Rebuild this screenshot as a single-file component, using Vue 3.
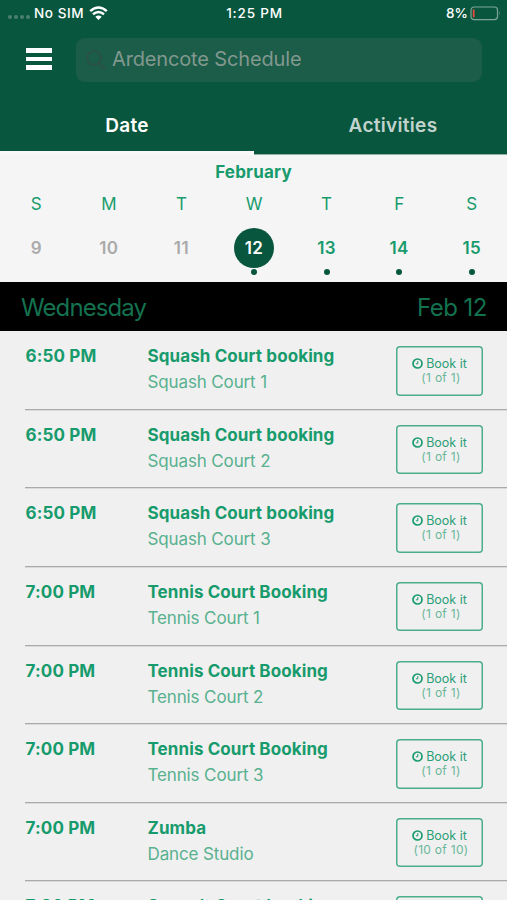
<template>
  <div class="app">
    <header class="header">
      <div class="status">
        <div class="status-left">
          <div class="signal"><i v-for="n in 4" :key="n"></i></div>
          <span class="carrier">No SIM</span>
          <svg class="wifi" width="19" height="15" viewBox="0 0 19 15">
            <path d="M1.2 5.1Q9.5-2 17.8 5.1" fill="none" stroke="#fff" stroke-width="2.5" />
            <path d="M4 8.3Q9.5 3.6 15 8.3" fill="none" stroke="#fff" stroke-width="2.5" />
            <path d="M6.3 10.8Q9.5 8.2 12.7 10.8L9.5 14Z" fill="#fff" />
          </svg>
        </div>
        <div class="clock">1:25 PM</div>
        <div class="status-right">
          <span class="percent">8%</span>
          <svg width="31" height="15" viewBox="0 0 31 15">
            <rect x="1" y="1" width="26.5" height="12.6" rx="3" fill="none" stroke="#7fa597" stroke-width="1.2" />
            <path d="M29 5.2q1.6 2.1 0 4.2z" fill="#7fa597" />
            <rect x="2.8" y="3.2" width="1.8" height="8.2" rx=".8" fill="#ea4b3c" />
          </svg>
        </div>
      </div>
      <div class="topbar">
        <button class="menu"><i></i><i></i><i></i></button>
        <div class="search">
          <svg width="22" height="22" viewBox="0 0 22 22" fill="none" stroke="#2b5145" stroke-width="1.8">
            <circle cx="9" cy="9" r="6.8" />
            <path d="M14 14l6 6" />
          </svg>
          <span>Ardencote Schedule</span>
        </div>
      </div>
      <nav class="tabs">
        <div class="tab active"><span>Date</span></div>
        <div class="tab"><span>Activities</span></div>
      </nav>
    </header>

    <section class="calendar">
      <div class="month"><span>February</span></div>
      <div class="week">
        <div v-for="day in days" :key="day.date" class="day" :class="{ past: day.date < today, selected: day.date === today }">
          <div class="letter">{{ day.letter }}</div>
          <div class="number">{{ day.date }}</div>
          <div v-if="day.date >= today" class="dot"></div>
        </div>
      </div>
    </section>

    <div class="day-title">
      <span class="weekday">Wednesday</span>
      <span class="date">Feb 12</span>
    </div>

    <div class="list">
      <div v-for="(item, index) in items" :key="index" class="item">
        <div class="time">{{ item.time }}</div>
        <div class="info">
          <div class="name">{{ item.name }}</div>
          <div class="place">{{ item.place }}</div>
        </div>
        <button class="book">
          <span class="book-label">
            <svg width="11" height="11" viewBox="0 0 11 11" fill="none" stroke="#179b6c">
              <circle cx="5.5" cy="5.5" r="4.5" stroke-width="1.7" />
              <path d="M5.8 3v2.8H3.9" stroke-width="1" />
            </svg>
            Book it
          </span>
          <span class="spots">({{ item.spots }})</span>
        </button>
      </div>
    </div>
  </div>
</template>

<script setup>
import { ref } from "vue";

const today = 12;

const days = [
  { letter: "S", date: 9 },
  { letter: "M", date: 10 },
  { letter: "T", date: 11 },
  { letter: "W", date: 12 },
  { letter: "T", date: 13 },
  { letter: "F", date: 14 },
  { letter: "S", date: 15 },
];

const items = ref([
  { time: "6:50 PM", name: "Squash Court booking", place: "Squash Court 1", spots: "1 of 1" },
  { time: "6:50 PM", name: "Squash Court booking", place: "Squash Court 2", spots: "1 of 1" },
  { time: "6:50 PM", name: "Squash Court booking", place: "Squash Court 3", spots: "1 of 1" },
  { time: "7:00 PM", name: "Tennis Court Booking", place: "Tennis Court 1", spots: "1 of 1" },
  { time: "7:00 PM", name: "Tennis Court Booking", place: "Tennis Court 2", spots: "1 of 1" },
  { time: "7:00 PM", name: "Tennis Court Booking", place: "Tennis Court 3", spots: "1 of 1" },
  { time: "7:00 PM", name: "Zumba", place: "Dance Studio", spots: "10 of 10" },
  { time: "7:30 PM", name: "Squash Court booking", place: "Squash Court 1", spots: "1 of 1" },
]);
</script>

<style>
body {
  background: #f0f0f0;
  overflow: hidden;
}
</style>

<style scoped>
* {
  box-sizing: border-box;
}
.app {
  height: 900px;
  overflow: hidden;
  font-family: "Inter", sans-serif;
  color: #179b6c;
  background: #f0f0f0;
}
button {
  font-family: inherit;
  background: none;
  border: 0;
  padding: 0;
}
.header {
  height: 155px;
  background: #09563e;
  color: #fff;
}
.status {
  display: grid;
  grid-template-columns: 1fr auto 1fr;
  align-items: center;
  height: 26px;
  padding: 0 6px 0 8px;
  font-size: 13.5px;
  font-weight: 500;
}
.status-left,
.status-right {
  display: flex;
  align-items: center;
}
.status-right {
  justify-content: flex-end;
  gap: 2px;
}
.signal {
  display: flex;
  gap: 2px;
  width: 26px;
  padding-top: 8px;
}
.signal i {
  width: 4px;
  height: 4px;
  border-radius: 50%;
  background: #4b806e;
}
.carrier {
  letter-spacing: .6px;
}
.wifi {
  margin-left: 5px;
}
.clock {
  letter-spacing: .8px;
}
.topbar {
  display: flex;
  align-items: center;
  height: 68px;
  padding: 0 25px 0 26px;
}
.menu {
  display: flex;
  flex-direction: column;
  gap: 4px;
  width: 26px;
  margin: -2px 24px 0 0;
}
.menu i {
  height: 4.7px;
  background: #fff;
}
.search {
  display: flex;
  flex: 1;
  align-items: center;
  height: 44px;
  padding-left: 9px;
  border-radius: 9px;
  background: #1b5d48;
  color: #82988f;
  font-size: 20px;
  letter-spacing: -.15px;
}
.search span {
  margin: -2px 0 0 5px;
}
.tabs {
  display: flex;
  height: 61px;
}
.tab {
  width: 253px;
  padding: 19px 0 0 25px;
  text-align: center;
  font-size: 19px;
  line-height: 26px;
  font-weight: 600;
  letter-spacing: .3px;
  color: #c2d3cd;
  border-bottom: 1px solid #8fb0a5;
}
.tab.active {
  width: 254px;
  padding-left: 0;
  color: #fff;
  border-bottom: 4px solid #f8f8f8;
}
.calendar {
  height: 127px;
  padding-top: 6px;
  background: #f5f5f5;
}
.month {
  text-align: center;
  font-size: 17px;
  line-height: 22px;
  font-weight: 700;
  letter-spacing: .2px;
}
.week {
  display: flex;
  width: 508px;
}
.day {
  display: flex;
  flex: 1;
  flex-direction: column;
  align-items: center;
  padding-top: 10px;
}
.letter {
  font-size: 17px;
  line-height: 22px;
}
.number {
  width: 40px;
  height: 40px;
  margin-top: 13px;
  border-radius: 50%;
  text-align: center;
  font-size: 17px;
  line-height: 40px;
  font-weight: 600;
  letter-spacing: .4px;
}
.past .number {
  color: #aaa;
}
.selected .number {
  color: #fff;
  background: #09563e;
}
.dot {
  width: 6px;
  height: 6px;
  margin-top: 1px;
  border-radius: 50%;
  background: #09563e;
}
.day-title {
  display: flex;
  justify-content: space-between;
  height: 49px;
  padding: 0 20px 0 21px;
  background: #000;
  color: #14724f;
  font-size: 24px;
  line-height: 51px;
}
.weekday {
  letter-spacing: -.9px;
}
.date {
  letter-spacing: -.5px;
}
.item {
  display: flex;
  height: 78.65px;
  margin-left: 25px;
  padding: 13px 24px 0 .5px;
  border-bottom: 1px solid #aaa;
  box-shadow: 0 1px #dadada;
}
.time {
  width: 122px;
  font-size: 17px;
  line-height: 24px;
  font-weight: 700;
  letter-spacing: .15px;
}
.info {
  flex: 1;
}
.name {
  font-size: 17px;
  line-height: 24px;
  font-weight: 700;
  letter-spacing: .1px;
}
.place {
  margin-top: 2px;
  font-size: 17px;
  line-height: 24px;
  letter-spacing: -.13px;
  color: #58b18f;
}
.book {
  display: flex;
  flex-direction: column;
  align-items: center;
  width: 87px;
  height: 49.5px;
  margin-top: 2px;
  padding-top: 10px;
  border-radius: 4px;
  box-shadow: inset 0 0 0 1.5px #4cae89;
  color: #2b9f77;
  font-size: 12.5px;
  line-height: 15px;
}
.book-label {
  display: flex;
  align-items: center;
  gap: 3px;
}
.spots {
  padding-left: 3px;
  font-size: 12px;
  line-height: 14px;
  letter-spacing: .3px;
  color: #69b799;
}
</style>
